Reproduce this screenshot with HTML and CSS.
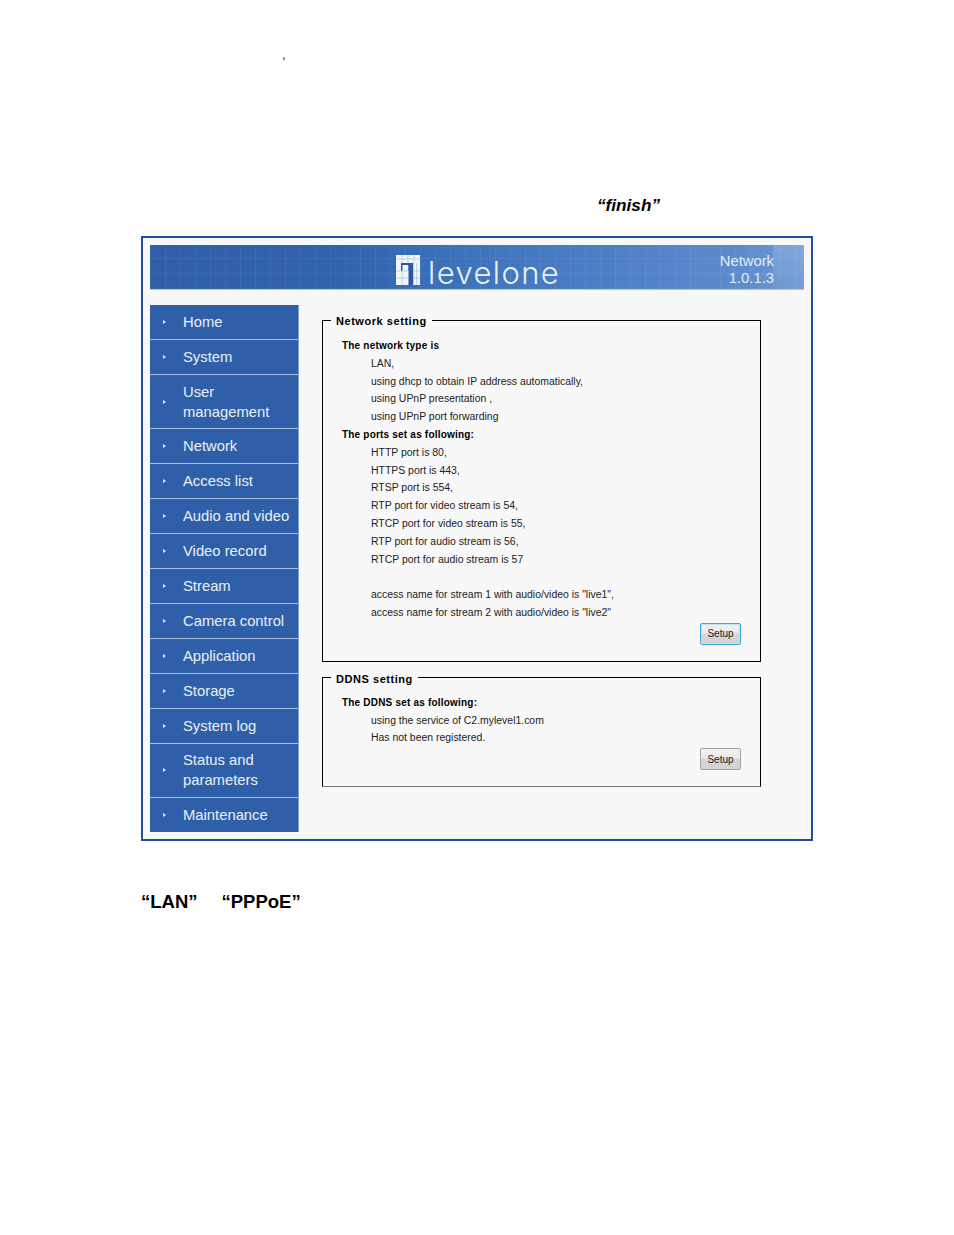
FILE: index.html
```html
<!DOCTYPE html>
<html lang="en">
<head>
<meta charset="utf-8">
<title>Network</title>
<link rel="stylesheet" href="styles.css">
</head>
<body>
<div class="page">
  <p class="comma">,</p>
  <p class="finish">“finish”</p>
  <div class="frame">
    <header class="banner">
      <div class="logo">
        <svg class="logo-mark" width="24" height="30" viewBox="0 0 24 30" aria-hidden="true">
          <rect x="5" y="8" width="12.3" height="22" fill="#2a58a4"/>
          <g fill="#f2f5fb">
            <rect x="0" y="0" width="24" height="8"/>
            <rect x="0" y="8" width="5" height="22"/>
            <rect x="6.5" y="10" width="5.8" height="20"/>
            <rect x="0" y="16" width="12.3" height="14"/>
            <rect x="17.3" y="8" width="6.7" height="22"/>
          </g>
          <g stroke="#a9c3e6" stroke-width="0.7" fill="none">
            <path d="M6 0V8M12 0V8M18 0V8M0 4H24M0 16H12.3M0 23H12.3M6 16V30M17.3 16H24M17.3 23H24M20.6 8V30"/>
          </g>
        </svg>
        <span class="logo-text">levelone</span>
      </div>
      <div class="banner-info">
        <div>Network</div>
        <div>1.0.1.3</div>
      </div>
    </header>
    <div class="columns">
      <nav class="menu">
        <a class="menu-item">Home</a>
        <a class="menu-item">System</a>
        <a class="menu-item double">User<br>management</a>
        <a class="menu-item">Network</a>
        <a class="menu-item">Access list</a>
        <a class="menu-item">Audio and video</a>
        <a class="menu-item">Video record</a>
        <a class="menu-item">Stream</a>
        <a class="menu-item">Camera control</a>
        <a class="menu-item">Application</a>
        <a class="menu-item">Storage</a>
        <a class="menu-item">System log</a>
        <a class="menu-item double">Status and<br>parameters</a>
        <a class="menu-item">Maintenance</a>
      </nav>
      <main class="content">
        <fieldset class="panel">
          <legend>Network setting</legend>
          <div class="line head">The network type is</div>
          <div class="line">LAN,</div>
          <div class="line">using dhcp to obtain IP address automatically,</div>
          <div class="line">using UPnP presentation ,</div>
          <div class="line">using UPnP port forwarding</div>
          <div class="line head">The ports set as following:</div>
          <div class="line">HTTP port is 80,</div>
          <div class="line">HTTPS port is 443,</div>
          <div class="line">RTSP port is 554,</div>
          <div class="line">RTP port for video stream is 54,</div>
          <div class="line">RTCP port for video stream is 55,</div>
          <div class="line">RTP port for audio stream is 56,</div>
          <div class="line">RTCP port for audio stream is 57</div>
          <div class="line">&nbsp;</div>
          <div class="line">access name for stream 1 with audio/video is "live1",</div>
          <div class="line">access name for stream 2 with audio/video is "live2"</div>
          <div class="actions"><button class="btn focus" type="button">Setup</button></div>
        </fieldset>
        <fieldset class="panel second">
          <legend>DDNS setting</legend>
          <div class="line head">The DDNS set as following:</div>
          <div class="line">using the service of C2.mylevel1.com</div>
          <div class="line">Has not been registered.</div>
          <div class="actions"><button class="btn" type="button">Setup</button></div>
        </fieldset>
      </main>
    </div>
  </div>
  <p class="modes"><span>“LAN”</span><span>“PPPoE”</span></p>
</div>
</body>
</html>
```
FILE: styles.css
```css
* { box-sizing: border-box; }
html, body { margin: 0; padding: 0; background: #fff; }
body { font-family: "Liberation Sans", Arial, sans-serif; color: #000; }
.page { width: 954px; height: 1235px; padding-left: 141px; overflow: hidden; }

.comma { margin: 0; padding: 48px 0 0 141px; height: 196px; font-size: 13px; line-height: 14px; color: #222; }
.finish { margin: 0; height: 40px; padding-left: 456px; font-size: 17.2px; line-height: 18px; font-weight: bold; font-style: italic; }

.frame { width: 672px; height: 605px; border: 2px solid #1f4f9f; background: #f8f8f8; padding: 7px 7px 0; }

.banner {
  width: 654px; height: 45px; display: flex; align-items: flex-start; justify-content: space-between;
  background-color: #3f74bd;
  background-image:
    linear-gradient(rgba(255,255,255,.16), rgba(255,255,255,.04)),
    repeating-linear-gradient(90deg, rgba(255,255,255,.05) 0 1px, transparent 1px 15px),
    repeating-linear-gradient(0deg, rgba(255,255,255,.05) 0 1px, transparent 1px 15px),
    linear-gradient(90deg, #2f5fa9 0%, #3263ae 30%, #3f74bd 50%, #4d7fc6 70%, #5c8ccd 90%, #6d98d2 100%);
  background-repeat: no-repeat, repeat, repeat, no-repeat;
  background-position: right top, 0 0, 0 0, 0 0;
  background-size: 31px 45px, auto, auto, auto;
  border-bottom: 1px solid #a9c3e6;
}
.logo { display: flex; align-items: flex-start; margin-left: 246px; padding-top: 10px; gap: 8px; }
.logo-mark { display: block; }
.logo-text { font-family: Inter, "Liberation Sans", sans-serif; font-weight: 300; font-size: 31px; line-height: 34px; letter-spacing: 1.4px; color: #e9f0fa; margin-top: 1px; }
.banner-info { margin-right: 30px; padding-top: 8px; text-align: right; font-size: 14.8px; line-height: 17px; color: #e4ebf6; }

.columns { display: flex; margin-top: 15px; align-items: flex-start; }
.menu { width: 149px; display: flex; flex-direction: column; border-right: 1px solid #7fa0d0; }
.menu-item {
  position: relative; display: flex; align-items: center; height: 34.95px; padding-left: 33px;
  background: #2f5fa8; border-bottom: 1px solid #a9bfdf; font-size: 14.8px; line-height: 20px; color: #eaf0f9;
}
.menu-item:last-child { border-bottom: 0; height: 34px; }
.menu-item.double { height: 54.4px; }
.menu-item::before {
  content: ""; position: absolute; left: 13px; top: 50%; margin-top: -2px;
  border-left: 3px solid #dfe8f5; border-top: 2.5px solid transparent; border-bottom: 2.5px solid transparent;
}

.content { margin-left: 23px; width: 439px; }
.panel { margin: 7px 0 0; padding: 9px 19px 16px 19px; width: 439px; border: 1px solid #000; min-width: 0; display: block; }
.panel.second { margin-top: 8px; padding-top: 8px; padding-bottom: 16px; border-bottom-color: #777; }
.panel legend { margin-left: -11px; padding: 2px 5px 0; font-size: 11px; line-height: 14px; font-weight: bold; letter-spacing: .55px; }
.line { height: 17.8px; line-height: 17.8px; font-size: 10.45px; padding-left: 29px; color: #222; white-space: nowrap; }
.line.head { padding-left: 0; font-size: 10px; font-weight: bold; color: #000; letter-spacing: .2px; }
.actions { display: flex; justify-content: flex-end; margin-top: 1px; }
.btn {
  width: 41px; height: 22px; padding: 0; border: 1px solid #a3a3a3; border-radius: 2px;
  background: linear-gradient(#f2f2f2 0, #e9e9e9 45%, #d6d6d6 50%, #d2d2d2 100%);
  font-family: "Liberation Sans", Arial, sans-serif; font-size: 10px; color: #222;
}
.btn.focus { border-color: #3fa9dd; box-shadow: inset 0 0 0 1px #bfe3f5; }

.modes { margin: 51px 0 0; display: flex; gap: 24px; font-size: 18.5px; line-height: 20px; font-weight: bold; }
```
